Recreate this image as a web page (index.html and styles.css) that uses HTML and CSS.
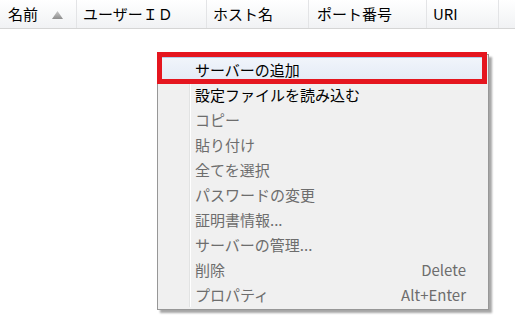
FILE: index.html
```html
<!DOCTYPE html>
<html lang="ja">
<head>
    <meta charset="UTF-8">
    <title>サーバー一覧</title>
    <link rel="stylesheet" href="styles.css">
</head>
<body>
    <div class="list">
        <!-- 列ヘッダー -->
        <div class="list-header">
            <div class="col col-name">名前
                <svg class="sort" width="11" height="8" viewBox="0 0 11 8">
                    <defs>
                        <linearGradient id="tri" x1="0" y1="0" x2="0" y2="1">
                            <stop offset="0" stop-color="#c9c9c9"/>
                            <stop offset="1" stop-color="#8e8e8e"/>
                        </linearGradient>
                    </defs>
                    <polygon points="5.5,0 11,8 0,8" fill="url(#tri)"/>
                </svg>
            </div>
            <div class="col col-user">ユーザーＩＤ</div>
            <div class="col col-host">ホスト名</div>
            <div class="col col-port">ポート番号</div>
            <div class="col col-uri">URI</div>
            <div class="col col-rest"></div>
        </div>
        <div class="list-body"></div>

        <!-- 右クリックメニュー -->
        <div class="context-menu">
            <div class="menu-item active marked"><span>サーバーの追加</span></div>
            <div class="menu-item"><span>設定ファイルを読み込む</span></div>
            <div class="menu-item disabled"><span>コピー</span></div>
            <div class="menu-item disabled"><span>貼り付け</span></div>
            <div class="menu-item disabled"><span>全てを選択</span></div>
            <div class="menu-item disabled"><span>パスワードの変更</span></div>
            <div class="menu-item disabled"><span>証明書情報...</span></div>
            <div class="menu-item disabled"><span>サーバーの管理...</span></div>
            <div class="menu-item disabled"><span>削除</span><span class="key">Delete</span></div>
            <div class="menu-item disabled"><span>プロパティ</span><span class="key">Alt+Enter</span></div>
        </div>
    </div>
</body>
</html>
```

FILE: styles.css
```css
body {
    margin: 0;
    background: #ffffff;
    font-family: "Noto Sans CJK JP", "Noto Sans", sans-serif;
    font-size: 15px;
    color: #000;
}
.list {
    position: relative;
    width: 515px;
    height: 335px;
    overflow: hidden;
}
.list-header {
    display: flex;
    height: 28px;
    border-bottom: 1px solid #d5d5d5;
    background: linear-gradient(#ffffff, #f1f2f4);
}
.col {
    display: flex;
    align-items: center;
    box-sizing: border-box;
    padding-left: 6px;
    border-right: 1px solid #e3e4e6;
    line-height: 28px;
    white-space: nowrap;
}
.col-name {
    width: 77px;
    padding-left: 8px;
}
.col-user {
    width: 130px;
}
.col-host {
    width: 102px;
}
.col-port {
    width: 118px;
    padding-left: 8px;
}
.col-uri {
    width: 72px;
}
.col-rest {
    flex: 1;
    border-right: none;
}
.sort {
    margin-left: 14px;
    margin-top: 1px;
}
.context-menu {
    position: absolute;
    left: 157px;
    top: 54px;
    width: 332px;
    box-sizing: border-box;
    padding: 2px 2px 2px 2px;
    background: #f0f0f0;
    border: 1px solid #979797;
    box-shadow: 3px 3px 2px rgba(0, 0, 0, 0.35);
}
.context-menu::before {
    content: "";
    position: absolute;
    left: 31px;
    top: 2px;
    bottom: 2px;
    width: 1px;
    background: #e2e3e3;
    border-right: 1px solid #ffffff;
}
.menu-item {
    position: relative;
    display: flex;
    justify-content: space-between;
    align-items: center;
    height: 25px;
    padding: 0 20px 0 35px;
    line-height: 25px;
    white-space: nowrap;
}
.menu-item.active {
    background: linear-gradient(#f1f5fb, #e3eaf6);
    box-shadow: inset 0 0 0 1px #b3cdeb;
    border-radius: 2px;
}
.menu-item.marked::after {
    content: "";
    position: absolute;
    left: -3px;
    right: -1px;
    top: -5px;
    bottom: -2px;
    border: 5px solid #e5161f;
}
.menu-item.disabled {
    color: #6d6d6d;
}
.key {
    color: #6d6d6d;
}
```
